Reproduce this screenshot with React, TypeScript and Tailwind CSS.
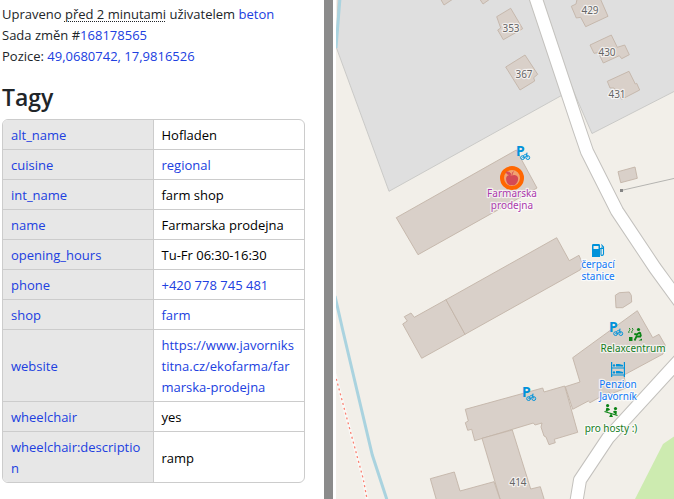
import React from 'react';

interface Tag {
  name: string;
  value: string;
  valueLink?: string;
}

const tags: Tag[] = [
  { name: 'alt_name', value: 'Hofladen' },
  { name: 'cuisine', value: 'regional', valueLink: '#cuisine-regional' },
  { name: 'int_name', value: 'farm shop' },
  { name: 'name', value: 'Farmarska prodejna' },
  { name: 'opening_hours', value: 'Tu-Fr 06:30-16:30' },
  { name: 'phone', value: '+420 778 745 481', valueLink: 'tel:+420778745481' },
  { name: 'shop', value: 'farm', valueLink: '#shop-farm' },
  {
    name: 'website',
    value: 'https://www.javornikstitna.cz/ekofarma/farmarska-prodejna',
    valueLink: 'https://www.javornikstitna.cz/ekofarma/farmarska-prodejna',
  },
  { name: 'wheelchair', value: 'yes' },
  { name: 'wheelchair:description', value: 'ramp' },
];

const buildings = [
  '440,-2 444,5 453,-1',
  '479,-2 483,4 490,-1',
  '496.7,16.7 510.7,8.3 522.7,28.7 503.3,39.7 497.7,30 500.7,28',
  '505.7,67 525,55 537.7,74.3 533.7,77.7 534.7,81 520,90',
  '577.3,-2 576,4 571.3,6.3 576.3,18 580.7,17.3 585.7,26.7 608,16.3 600,-2',
  '590,45 611.3,35 617.3,47.3 624.7,45 629.3,54.7 621.7,58.7 619.3,55.7 603.3,63 598.3,52.7 594,53.3',
  '607.3,81.3 629,71.3 635.3,84 636.7,83.3 639.7,90 621.7,99.3 614,88 610,88',
  '396.3,217.7 516.3,150 537,188 418,254.7',
  '402.7,324 407.3,321 404.3,316.7 411,313 414.3,317.3 446,299.7 465,334.3 421.7,358.3',
  '446,299.7 556.7,237.7 569.3,260.7 579,255.3 583,265 580,270 465,334.3',
  '618,171.7 635,167 637.3,178.3 620.7,182.7',
  '615.3,295.3 619.3,292.7 629.3,292 631.3,295.3 631.7,302 622.7,307.7 616,307.7',
  '572.7,357.7 637.3,310.7 652.7,337.7 659,334.3 665.3,345.3 663,354 624,375 626,388 611,394 609,392 590,402.7 588.3,401 572.7,409.3 565.3,386.7 580,382',
  '465.3,409.3 542.7,388 544,392 564.7,386 577.7,432.3 554.3,439.3 555.3,442.7 549,444.7 546,437 544,436 541,427 542,423 535,425 533.3,423 474.7,440.7 471.7,429.3 467.7,430.3 465.3,422.7 468.3,421',
  '482,438.3 512.3,430 530.7,489 540.3,486.7 545,502 501,502',
  '430.3,478.7 454.3,472 460,491 494,481.7 501,502 437,502',
];

const roads = [
  'M535-4L580 131 587 151.5 617 211 655 268 682 305',
  'M682 357L667 373.5 608 438 580 480 576 504',
];

const houseNumbers = [
  { x: 511, y: 32, text: '353' },
  { x: 524, y: 78, text: '367' },
  { x: 590, y: 14, text: '429' },
  { x: 607, y: 56, text: '430' },
  { x: 617, y: 98, text: '431' },
  { x: 518, y: 486, text: '414' },
];

const Label: React.FC<{ x: number; y: number; lines: string[]; color: string }> = ({ x, y, lines, color }) => (
  <text
    textAnchor="middle"
    className={`text-[10px] stroke-white/70 [paint-order:stroke] [stroke-linejoin:round] ${color}`}
    strokeWidth="2.4"
  >
    {lines.map((line, i) => (
      <tspan key={line} x={x} y={y + i * 12}>{line}</tspan>
    ))}
  </text>
);

const BikeParking: React.FC<{ x: number; y: number }> = ({ x, y }) => (
  <g transform={`translate(${x} ${y})`} className="text-[#0092da]">
    <text x="-1" y="10" className="fill-[#0092da] text-[14px] font-bold">P</text>
    <g fill="none" stroke="currentColor" strokeWidth="1">
      <circle cx="5.6" cy="11.6" r="1.9" />
      <circle cx="10.8" cy="11.6" r="1.9" />
      <path d="M5.6 11.6l1.8-3h2.6l-2 3H5.6M10.8 11.6L9.2 7.2h1.6" strokeWidth="0.8" />
    </g>
  </g>
);

const MapView: React.FC = () => (
  <svg
    className="absolute inset-0 h-full w-full font-['Noto_Sans','Open_Sans',sans-serif]"
    viewBox="336 0 338 499"
    preserveAspectRatio="xMinYMin slice"
    role="img"
    aria-label="Mapa"
  >
    <rect x="336" y="0" width="338" height="499" fill="#f2efe9" />

    {/* landuse */}
    <g fill="#dfdfdf" stroke="#c6c6c4" strokeWidth="0.9">
      <path d="M338-2L336.5 48 389 191.3 566 93 536-2z" />
      <path d="M536-2H676V90.5L592 133.5 576 97z" />
    </g>
    <path d="M676 435L663 444 634 501H676z" fill="#cdebb0" />

    {/* streams */}
    <g fill="none" stroke="#aad3df" strokeWidth="3">
      <path d="M340-2L336 48" />
      <path d="M335 296L342.7 330 372.3 455 388 503" />
    </g>

    {/* footpath */}
    <path d="M335 374L350 430 363 478 368 504" fill="none" stroke="#fff" strokeOpacity="0.6" strokeWidth="3" />
    <path d="M335 374L350 430 363 478 368 504" fill="none" stroke="#fa8072" strokeWidth="1.3" strokeDasharray="2 3" />

    <g fill="none" stroke="#c3c1bd" strokeWidth="14" strokeLinejoin="round">
      {roads.map(d => <path key={d} d={d} />)}
    </g>

    <g fill="#d9d0c9" stroke="#c3b4a8" strokeWidth="0.9">
      {buildings.map(points => (
        <polygon key={points} points={points} />
      ))}
    </g>

    <g fill="none" stroke="#fff" strokeWidth="12" strokeLinejoin="round">
      {roads.map(d => <path key={d} d={d} />)}
    </g>

    {/* power line */}
    <path d="M621 190.5L676 178" stroke="#a5a5a2" strokeWidth="0.8" />
    <rect x="620" y="189" width="3" height="3" fill="#858585" />

    {houseNumbers.map(h => (
      <Label key={h.text} x={h.x} y={h.y} lines={[h.text]} color="fill-[#666666]" />
    ))}

    <BikeParking x={517} y={146} />
    <BikeParking x={610} y={322} />
    <BikeParking x={523} y={387} />

    {/* farm shop */}
    <circle cx="512" cy="178" r="10" fill="#f1a271" stroke="#ff6600" strokeWidth="4" />
    <path d="M511.8 175.6c-1.8-1.2-5-.9-5.6 2.2-.6 3 1.5 7 4 7.4.8.1 1.2-.3 1.8-.3s1 .4 1.8.3c2.5-.4 4.800-4.4 4.2-7.4-.6-3.1-4.2-3.4-6.2-2.2z" fill="#d44a55" />
    <path d="M512 175.5c0-1.5.5-3 1.5-4M511 174.5c-2.6.5-4.500-.5-5-2.500 2.5-.4 4.4.4 5 2.5z" fill="#d44a55" stroke="#d44a55" strokeWidth="0.8" />
    <Label x={512} y={197} lines={['Farmarska', 'prodejna']} color="fill-[#ac39ac]" />

    {/* fuel */}
    <g transform="translate(592 244)" fill="none" stroke="#0092da">
      <path d="M0 1.2Q0 0 1.2 0H6.8Q8 0 8 1.2V13H0zM1.5 2V5H6.5V2z" fill="#0092da" fillRule="evenodd" stroke="none" />
      <path d="M8 4.5h1V10.5Q9 11.5 10 11.5T11.5 10V3L9.3.5M10 2.5V4.5H11.5" strokeWidth="1.1" />
    </g>
    <Label x={598} y={268} lines={['čerpací', 'stanice']} color="fill-[#0f78f5]" />

    {/* sauna */}
    <g transform="translate(628 327)" stroke="#0c8416" fill="none">
      <path d="M1 1q2 1 .5 2.5T1 6M4 1q2 1 .5 2.5T4 6" strokeWidth="0.9" />
      <path d="M1 10H4.5V14H1z" fill="#0c8416" stroke="none" />
      <circle cx="10.5" cy="2.5" r="1.6" fill="#0c8416" stroke="none" />
      <path d="M12 5.2L13 9.5M12 5.2L8.8 7.5 6.3 7M13 9.5H8.5L6.5 13.5" strokeWidth="1.8" strokeLinejoin="round" />
      <path d="M10.5 13.5h3.5v-2z" fill="#0c8416" stroke="none" />
    </g>
    <Label x={633} y={352} lines={['Relaxcentrum']} color="fill-[#177d1e]" />

    {/* hostel */}
    <g transform="translate(611 362)" stroke="#0092da" fill="none" strokeWidth="1.2">
      <path d="M.6 0V15M13.4 0V15M.6 6H13.4M.6 13H13.4" />
      <path d="M5 2H8L12 3V4.500H5zM5 9H8L12 10V11.500H5z" fill="#0092da" stroke="none" />
      <circle cx="3" cy="3.4" r="1.2" fill="#0092da" stroke="none" />
      <circle cx="3" cy="10.4" r="1.2" fill="#0092da" stroke="none" />
    </g>
    <Label x={618} y={388} lines={['Penzion', 'Javorník']} color="fill-[#0f78f5]" />

    {/* playground */}
    <g transform="translate(604 404)" stroke="#0c8416" fill="none">
      <circle cx="3.6" cy="1.6" r="1.6" fill="#0c8416" stroke="none" />
      <circle cx="11.5" cy="4.6" r="1.6" fill="#0c8416" stroke="none" />
      <path d="M3.3 4L2.6 7.5M3.3 4.5L5.5 6M11.8 7L11.6 10.5M11.5 7.5L9.5 8.2" strokeWidth="2" />
      <path d="M.5 7.5L13.5 11.5" strokeWidth="1.3" />
      <path d="M7 9L5.2 13H9z" fill="#0c8416" stroke="none" />
    </g>
    <Label x={611} y={432} lines={['pro hosty :)']} color="fill-[#177d1e]" />
  </svg>
);

const App: React.FC = () => {
  return (
    <div className="flex h-screen overflow-hidden bg-white font-['Open_Sans','Noto_Sans',sans-serif] text-[13px] leading-[21px] text-[#212529]">
      <aside className="flex w-[336px] shrink-0">
        <div className="min-w-0 flex-1 pt-1 pl-0.5 pr-[19px]">
          <div>
            Upraveno{' '}
            <time className="underline decoration-dotted decoration-1 underline-offset-2">před 2 minutami</time>{' '}
            uživatelem <a href="#beton" className="text-[#2040e0]">beton</a>
          </div>
          <div>
            Sada změn #<a href="#168178565" className="text-[#2040e0]">168178565</a>
          </div>
          <div>
            Pozice: <a href="#map" className="text-[#2040e0]">49,0680742, 17,9816526</a>
          </div>

          <h2 className="mt-4 mb-2 text-[23px] leading-7 font-semibold">Tagy</h2>

          <div className="overflow-hidden rounded-md border border-[#cccccc]">
            <table className="w-full table-fixed border-separate border-spacing-0 text-left">
              <tbody className="[&>tr:last-child>*]:border-b-0">
                {tags.map(tag => (
                  <tr key={tag.name}>
                    <th className="border-r border-b border-[#cccccc] bg-[#e7e7e7] px-2 pt-[5px] pb-[3px] font-normal break-words">
                      <a href={`#${tag.name}`} className="text-[#2040e0]">{tag.name}</a>
                    </th>
                    <td className="border-b border-[#cccccc] px-2 pt-[5px] pb-[3px] break-words text-black">
                      {tag.valueLink ? (
                        <a href={tag.valueLink} className="text-[#2040e0]">{tag.value}</a>
                      ) : (
                        tag.value
                      )}
                    </td>
                  </tr>
                ))}
              </tbody>
            </table>
          </div>
        </div>
        {/* scrollbar thumb */}
        <div className="mr-[3px] w-[9px] bg-[#8b8b8b]" />
      </aside>

      <main className="relative flex-1 overflow-hidden bg-[#f2efe9]">
        <MapView />
      </main>
    </div>
  );
};

export default App;
